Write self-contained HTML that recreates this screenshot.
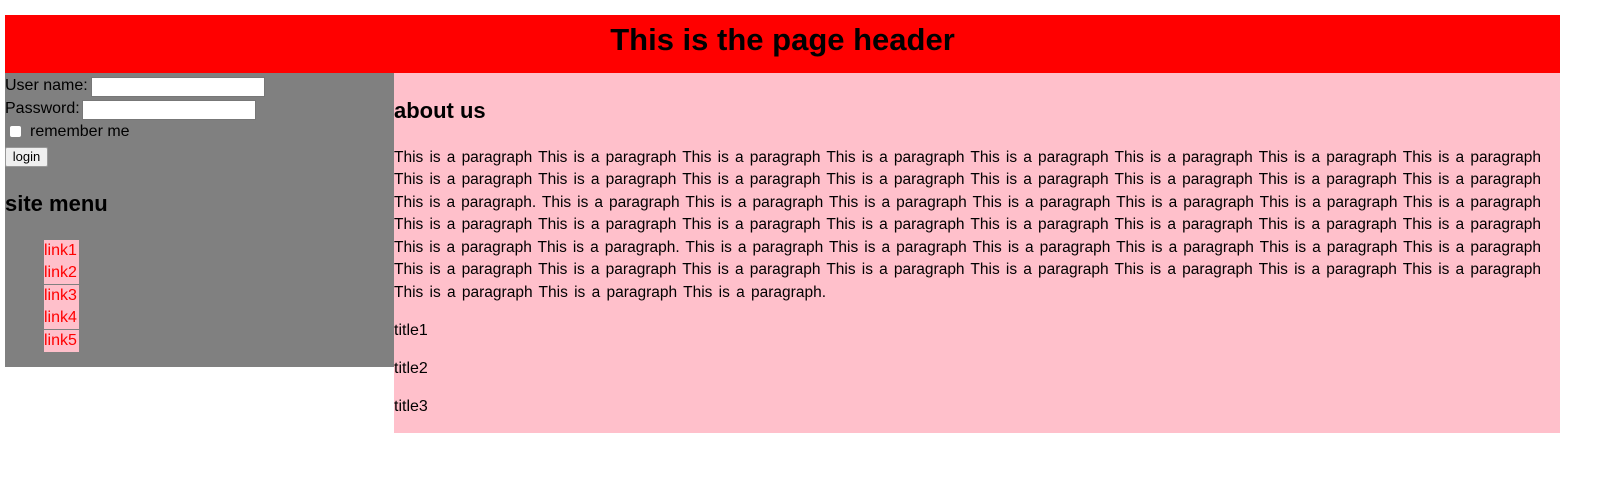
<!DOCTYPE html>
<html><head><meta charset="utf-8"><style>
body{margin:0;width:1597px;height:489px;background:#fff;font-family:"Liberation Sans",sans-serif;position:relative;overflow:hidden;color:#000}
.a{position:absolute;white-space:nowrap}
#hd{left:5px;top:15px;width:1555px;height:58px;background:#f00;font-weight:bold;font-size:31px;text-align:center;line-height:50px}
#sb{left:5px;top:73px;width:389px;height:294px;background:#808080}
#mn{left:394px;top:73px;width:1166px;height:360px;background:#ffc0cb}
.t{font-size:16px}
.inp{position:absolute;background:#fff;border:1px solid #777;height:18px}
.ln{position:absolute;left:394px;width:1147px;font-size:15.5px;line-height:20px;text-align:justify;text-align-last:justify;white-space:nowrap}
.lk{position:absolute;left:44px;background:#ffc0cb;color:#f00;font-size:16px;line-height:22px;padding-right:2px}
</style></head><body>
<div class="a" id="hd">This is the page header</div>
<div class="a" id="sb"></div>
<div class="a" id="mn"></div>
<div class="a t" style="left:5px;top:77px">User name:</div>
<div class="inp" style="left:91px;top:77px;width:172px"></div>
<div class="a t" style="left:5px;top:100px">Password:</div>
<div class="inp" style="left:82px;top:100px;width:172px"></div>
<div class="a" style="left:10px;top:126px;width:11px;height:11px;background:#fff;border-radius:2px"></div>
<div class="a t" style="left:30px;top:123px">remember me</div>
<div class="a" style="left:5px;top:147px;width:41px;height:18px;background:#efefef;border:1px solid #999;border-radius:2px;font-size:13px;text-align:center;line-height:18px">login</div>
<div class="a" style="left:5px;top:191px;font-size:22px;font-weight:bold">site menu</div>
<div class="lk" style="top:240px">link1</div>
<div class="lk" style="top:262px">link2</div>
<div class="lk" style="top:285px">link3</div>
<div class="lk" style="top:307px">link4</div>
<div class="lk" style="top:330px">link5</div>
<div class="a" style="left:394px;top:98px;font-size:22px;font-weight:bold">about us</div>
<div class="ln" style="top:148px">This is a paragraph This is a paragraph This is a paragraph This is a paragraph This is a paragraph This is a paragraph This is a paragraph This is a paragraph</div>
<div class="ln" style="top:170px">This is a paragraph This is a paragraph This is a paragraph This is a paragraph This is a paragraph This is a paragraph This is a paragraph This is a paragraph</div>
<div class="ln" style="top:193px">This is a paragraph. This is a paragraph This is a paragraph This is a paragraph This is a paragraph This is a paragraph This is a paragraph This is a paragraph</div>
<div class="ln" style="top:215px">This is a paragraph This is a paragraph This is a paragraph This is a paragraph This is a paragraph This is a paragraph This is a paragraph This is a paragraph</div>
<div class="ln" style="top:238px">This is a paragraph This is a paragraph. This is a paragraph This is a paragraph This is a paragraph This is a paragraph This is a paragraph This is a paragraph</div>
<div class="ln" style="top:260px">This is a paragraph This is a paragraph This is a paragraph This is a paragraph This is a paragraph This is a paragraph This is a paragraph This is a paragraph</div>
<div class="ln" style="top:283px;width:432px">This is a paragraph This is a paragraph This is a paragraph.</div>
<div class="a t" style="left:394px;top:322px">title1</div>
<div class="a t" style="left:394px;top:360px">title2</div>
<div class="a t" style="left:394px;top:398px">title3</div>
</body></html>
